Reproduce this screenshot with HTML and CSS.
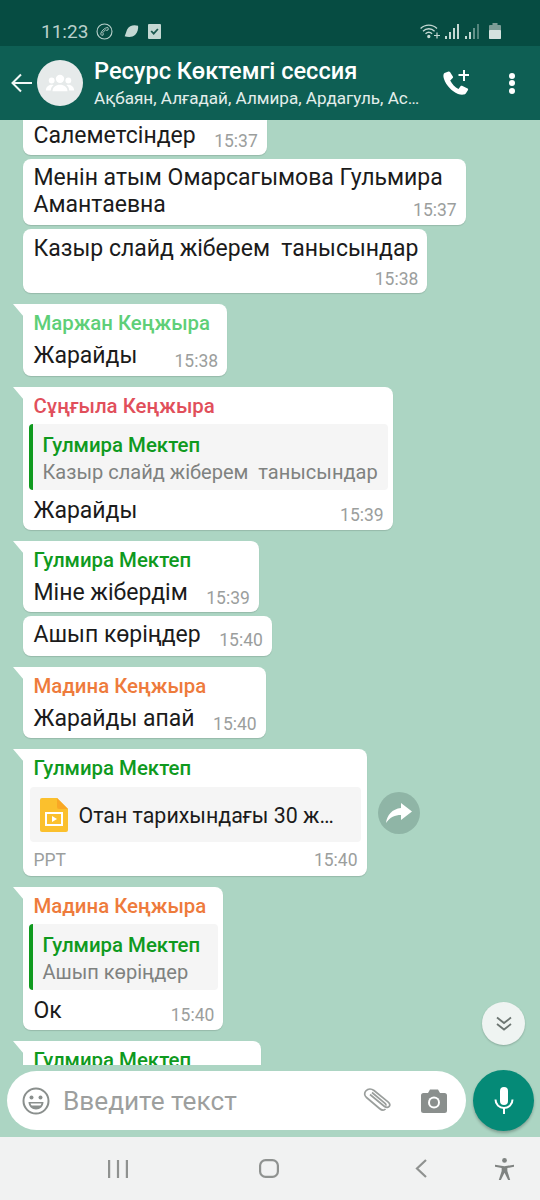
FILE: index.html
```html
<!DOCTYPE html>
<html lang="ru">
<head>
  <meta charset="UTF-8" />
  <meta name="viewport" content="width=device-width, initial-scale=1" />
  <title>Ресурс Көктемгі сессия</title>
  <link rel="stylesheet" href="styles.css">
</head>
<body>
  <div class="status-bar">
    <span class="status-time">11:23</span>
    <svg class="status-call" width="17" height="17" viewBox="0 0 20 20" fill="none" stroke="#b9d0cb" stroke-width="1.300">
      <circle cx="10" cy="10" r="8.800"/>
      <path d="M13.800 5.200c-4 .6-7.600 4.200-8.400 8 .8 1 1.700 1.400 2.800 1.200l.4-1.800-1-1 3.800-3.800 1 1 1.800-.6c.4-1 .2-2-.4-3z" stroke-width="1.100"/>
    </svg>
    <svg class="status-leaf" width="15" height="14" viewBox="0 0 16 14">
      <path d="M15 1.500C11 0 5.500 1 3.500 5 2.500 7 2 9.500 .7 12.500 4 13.500 9 14 12 11 14.500 8.500 15.500 4.500 15 1.500z" fill="#c4d8d3"/>
    </svg>
    <svg width="13" height="15" viewBox="0 0 13 15">
      <rect width="13" height="15" rx="1" fill="#c4d8d3"/>
      <path d="M3.200 7l2.500 2.700 4.200-4.700" fill="none" stroke="#1c5a50" stroke-width="1.800"/>
    </svg>
    <span class="status-right">
      <svg width="20" height="16" viewBox="0 0 20 16" fill="none" stroke="#c4d8d3" stroke-width="1.300">
        <path d="M.6 5.500c4.600-4.600 11.800-4.600 16.400 0M3 8.200c3.300-3.300 8.300-3.300 11.600 0M5.500 10.800c2-1.900 4.600-1.900 6.600 0"/>
        <circle cx="8.800" cy="13.500" r="1" fill="#c4d8d3"/>
        <path d="M14 12.500h6M17 9.500v6" stroke-width="1.200"/>
      </svg>
      <svg width="14" height="16" viewBox="0 0 14 16" fill="#c4d8d3">
        <rect x="0" y="13" width="2" height="3"/><rect x="4" y="9" width="2" height="7"/>
        <rect x="8" y="5" width="2" height="11"/><rect x="12" y="1" width="2" height="15"/>
      </svg>
      <svg width="14" height="16" viewBox="0 0 14 16" fill="#c4d8d3">
        <rect x="0" y="13" width="2" height="3"/><rect x="4" y="9" width="2" height="7"/>
        <rect x="8" y="5" width="2" height="11" opacity=".5"/><rect x="12" y="1" width="2" height="15" opacity=".4"/>
      </svg>
      <svg class="battery" width="12" height="16" viewBox="0 0 12 16">
        <rect x="3.500" y="0" width="5" height="2" fill="#7d9d97"/>
        <rect x="0" y="2" width="12" height="14" rx="1" fill="#7d9d97"/>
        <rect x="0" y="7" width="12" height="9" rx="1" fill="#d5e2de"/>
      </svg>
    </span>
  </div>

  <header class="app-bar">
    <svg class="back" width="23" height="20" viewBox="0 0 23 20" fill="none" stroke="#f2f7f6" stroke-width="2">
      <path d="M22 10H2.500M11 1.500 2.500 10l8.500 8.500"/>
    </svg>
    <div class="avatar">
      <svg width="30" height="20" viewBox="0 0 34 24" fill="#fff">
        <circle cx="17" cy="7" r="5"/><circle cx="7" cy="9" r="3.500"/><circle cx="27" cy="9" r="3.500"/>
        <path d="M8 22c0-5 4-8 9-8s9 3 9 8z"/>
        <path d="M0 21c0-4 3-7 7-7 1 0 1.700.2 2.400.5C7 16 6 19 6 21zM34 21c0-4-3-7-7-7-1 0-1.700.2-2.400.5C27 16 28 19 28 21z"/>
      </svg>
    </div>
    <div class="chat-title">
      <div class="chat-name">Ресурс Көктемгі сессия</div>
      <div class="chat-members">Ақбаян, Алғадай, Алмира, Ардагуль, Ас…</div>
    </div>
    <svg class="add-call" width="26" height="26" viewBox="0 0 26 26" fill="#fff">
      <path d="M5.500 1.500 1.500 3C.3 3.800 0 6 1 9c2.300 6.500 7.500 12 14 15 3 1 6.500 1 7.800-.5l2.200-3.500c.3-.6.100-1.100-.4-1.400l-5.600-2.800c-.5-.2-1-.1-1.300.3l-2.200 2.800c-3.500-1.800-6.500-5-8.300-8.500L9.700 8c.4-.3.500-.8.300-1.300L7 2c-.3-.5-1-.7-1.500-.5z"/>
      <path d="M20 0h2v4h4v2h-4v5h-2V6h-4.500V4H20z"/>
    </svg>
    <div class="more"><i></i><i></i><i></i></div>
  </header>

  <main class="chat">
    <div class="messages">
      <div class="bubble first">
        <div class="row"><span class="text">Салеметсіндер</span><span class="time">15:37</span></div>
      </div>
      <div class="bubble two-lines">
        <div class="text">Менін атым Омарсагымова Гульмира<br>Амантаевна</div>
        <div class="time">15:37</div>
      </div>
      <div class="bubble time-below">
        <div class="text">Казыр слайд жіберем&nbsp; танысындар</div>
        <div class="time">15:38</div>
      </div>

      <div class="bubble tail">
        <div class="sender marzhan">Маржан Кеңжыра</div>
        <div class="row"><span class="text">Жарайды</span><span class="time">15:38</span></div>
      </div>

      <div class="bubble tail">
        <div class="sender sungyla">Сұңғыла Кеңжыра</div>
        <div class="quote">
          <div class="quote-name">Гулмира Мектеп</div>
          <div class="quote-text">Казыр слайд жіберем&nbsp; танысындар</div>
        </div>
        <div class="row"><span class="text">Жарайды</span><span class="time">15:39</span></div>
      </div>

      <div class="bubble tail short">
        <div class="sender gulmira">Гулмира Мектеп</div>
        <div class="row"><span class="text">Міне жібердім</span><span class="time">15:39</span></div>
      </div>
      <div class="bubble same">
        <div class="row"><span class="text">Ашып көріңдер</span><span class="time">15:40</span></div>
      </div>

      <div class="bubble tail short">
        <div class="sender madina">Мадина Кеңжыра</div>
        <div class="row"><span class="text">Жарайды апай</span><span class="time">15:40</span></div>
      </div>

      <div class="file-line">
        <div class="bubble tail file-bubble">
          <div class="sender gulmira">Гулмира Мектеп</div>
          <div class="file">
            <svg width="28" height="34" viewBox="0 0 28 34">
              <path d="M0 2a2 2 0 0 1 2-2h15l11 11v21a2 2 0 0 1-2 2H2a2 2 0 0 1-2-2z" fill="#fbc02d"/>
              <path d="M17 0l11 11H19a2 2 0 0 1-2-2z" fill="#f9a825"/>
              <rect x="6" y="15" width="16" height="12" fill="none" stroke="#fff" stroke-width="2"/>
              <path d="M12 18v6l5-3z" fill="#fff"/>
            </svg>
            <span class="file-name">Отан тарихындағы 30 ж…</span>
          </div>
          <div class="row file-foot"><span class="file-type">PPT</span><span class="time">15:40</span></div>
        </div>
        <div class="forward">
          <svg width="26" height="20" viewBox="0 0 26 20" fill="#fff">
            <path d="M15 0l11 8.500L15 17v-5C9 12 4 14 0 20 1 12 6 6 15 5z"/>
          </svg>
        </div>
      </div>

      <div class="bubble tail">
        <div class="sender madina">Мадина Кеңжыра</div>
        <div class="quote small">
          <div class="quote-name">Гулмира Мектеп</div>
          <div class="quote-text">Ашып көріңдер</div>
        </div>
        <div class="row"><span class="text">Ок</span><span class="time">15:40</span></div>
      </div>

      <div class="bubble tail last">
        <div class="sender gulmira">Гулмира Мектеп</div>
      </div>
    </div>

    <div class="scroll-down">
      <svg width="18" height="16" viewBox="0 0 18 16" fill="none" stroke="#6d7672" stroke-width="1.800">
        <path d="M2 1.500l7 5.500 7-5.500M2 8l7 5.500L16 8"/>
      </svg>
    </div>

    <div class="composer">
      <div class="input">
        <svg class="smile" width="28" height="28" viewBox="0 0 28 28">
          <circle cx="14" cy="14" r="12.500" fill="none" stroke="#8a8f8d" stroke-width="2"/>
          <circle cx="9.500" cy="10.500" r="2" fill="#8a8f8d"/><circle cx="18.500" cy="10.500" r="2" fill="#8a8f8d"/>
          <path d="M6.500 15h15c0 4.500-3.500 7.500-7.500 7.500S6.500 19.500 6.500 15z" fill="#8a8f8d"/>
          <path d="M8.500 16.500h11c-.4 1-.7 1.500-1.200 2h-8.600c-.5-.5-.9-1-1.200-2z" fill="#fff"/>
        </svg>
        <span class="placeholder">Введите текст</span>
        <svg class="clip" width="28" height="25" viewBox="0 0 28 25" fill="none" stroke="#9a9e9c" stroke-width="1.700">
          <path d="M7 6.500l14.500 12c2 1.500 4 1 4.800-.2s.6-3-1.300-4.500L11 2.500C8.500.6 5 .6 3 2.800S1.300 7.700 3.500 9.500l13 11c2 1.700 4.500 2 6 .5M9 4.500l13 10.800c1 .9 1 1.700.5 2.300"/>
        </svg>
        <svg class="camera" width="26" height="24" viewBox="0 0 26 24">
          <path d="M2.500 4H7l2-3.500h8L19 4h4.500A2.500 2.500 0 0 1 26 6.500v15a2.500 2.500 0 0 1-2.500 2.500h-21A2.500 2.500 0 0 1 0 21.500v-15A2.500 2.500 0 0 1 2.500 4z" fill="#8a8f8d"/>
          <circle cx="13" cy="13.500" r="6" fill="#fff"/><circle cx="13" cy="13.500" r="4" fill="#8a8f8d"/>
        </svg>
      </div>
      <div class="mic">
        <svg width="20" height="28" viewBox="0 0 20 28">
          <rect x="6" y="0" width="8" height="18" rx="4" fill="#fff"/>
          <path d="M1.500 12.500c0 5 3.800 8.500 8.500 8.500s8.500-3.500 8.500-8.500" fill="none" stroke="#fff" stroke-width="2"/>
          <rect x="9" y="20" width="2" height="7" fill="#fff"/>
        </svg>
      </div>
    </div>
  </main>

  <nav class="nav-bar">
    <svg width="20" height="18" viewBox="0 0 20 18" fill="#8f9290">
      <rect x="0" y="0" width="2.200" height="18"/><rect x="8.900" y="0" width="2.200" height="18"/><rect x="17.800" y="0" width="2.200" height="18"/>
    </svg>
    <svg class="nav-home" width="20" height="19" viewBox="0 0 20 19" fill="none" stroke="#8f9290" stroke-width="2.200">
      <rect x="1.100" y="1.100" width="17.800" height="16.800" rx="5.500"/>
    </svg>
    <svg class="nav-back" width="12" height="19" viewBox="0 0 12 19" fill="none" stroke="#8f9290" stroke-width="2.200">
      <path d="M11 1 2 9.500l9 8.500"/>
    </svg>
    <svg class="nav-person" width="19" height="24" viewBox="0 0 20 24" fill="#7f8381">
      <circle cx="10" cy="3" r="2.500"/>
      <path d="M0 7.500 10 9l10-1.500v2l-7 1.500v3l3 9.500h-2.200L10 16l-3.800 7.500H4l3-9.500v-3L0 9.500z"/>
    </svg>
  </nav>
</body>
</html>
```

FILE: styles.css
```css
* {
  box-sizing: border-box;
}

body {
  margin: 0;
  width: 540px;
  height: 1200px;
  overflow: hidden;
  display: flex;
  flex-direction: column;
  font-family: Roboto, "Noto Sans", sans-serif;
  background: #acd5c3;
}

/* status bar */
.status-bar {
  height: 46px;
  flex: none;
  display: flex;
  align-items: center;
  padding: 16px 39px 0 41px;
  background: #064c42;
  color: #b9d0cb;
  font-size: 19px;
}

.status-time {
  margin-right: 8px;
}

.status-call {
  margin-right: 11px;
}

.status-leaf {
  margin-right: 9px;
}

.status-right {
  margin-left: auto;
  display: flex;
  align-items: center;
  gap: 5.500px;
}

.battery {
  margin-left: 5px;
}

/* header */
.app-bar {
  height: 74px;
  flex: none;
  display: flex;
  align-items: center;
  padding-left: 10px;
  background: #0e5f54;
  color: #fff;
}

.back {
  margin-right: 4px;
}

.avatar {
  width: 46px;
  height: 46px;
  border-radius: 50%;
  background: #e6eaea;
  display: flex;
  align-items: center;
  justify-content: center;
}

.chat-title {
  margin-left: 11px;
  width: 335px;
}

.chat-name {
  font-size: 23.600px;
  font-weight: 500;
  line-height: 28px;
  white-space: nowrap;
}

.chat-members {
  margin-top: 1px;
  font-size: 17.100px;
  line-height: 24px;
  color: #e3eeeb;
  white-space: nowrap;
}

.add-call {
  margin-left: 14px;
}

.more {
  margin-left: 39.500px;
  display: flex;
  flex-direction: column;
  gap: 1.500px;
}

.more i {
  width: 6px;
  height: 6px;
  border-radius: 50%;
  background: #fff;
}

/* chat */
.chat {
  flex: 1;
  position: relative;
  display: flex;
  flex-direction: column;
  min-height: 0;
}

.messages {
  flex: 1;
  min-height: 0;
  overflow: hidden;
  display: flex;
  flex-direction: column;
  align-items: flex-start;
  padding-left: 23px;
}

.bubble {
  position: relative;
  flex: none;
  background: #fff;
  border-radius: 8px;
  padding: 0 9px 0 10.500px;
  margin-top: 11px;
  box-shadow: 0 1px 1px rgba(0, 0, 0, .13);
}

.bubble.first {
  margin-top: 0;
  height: 35px;
  border-radius: 0 0 8px 8px;
}

.bubble.first .row {
  margin-top: 1px;
}

.bubble.two-lines,
.bubble.time-below,
.bubble.same {
  margin-top: 4px;
}

.bubble.two-lines {
  height: 66px;
  padding-top: 5px;
}

.bubble.two-lines .text {
  line-height: 27px;
  margin-right: 14px;
}

.bubble.two-lines .time {
  text-align: right;
  margin-top: -18px;
}

.bubble.time-below {
  height: 64px;
  padding-top: 5px;
}

.bubble.time-below .time {
  text-align: right;
  margin-top: 5px;
}

.bubble.same {
  height: 40px;
  padding-top: 4px;
}

.bubble.tail {
  border-top-left-radius: 0;
  padding-top: 6px;
  padding-bottom: 5px;
}

.bubble.tail.short {
  padding-bottom: 4px;
}

.bubble.tail::before {
  content: "";
  position: absolute;
  left: -10px;
  top: 0;
  width: 11px;
  height: 13px;
  background: #fff;
  clip-path: polygon(0 0, 100% 0, 100% 100%);
}

.bubble.last {
  width: 238px;
  height: 60px;
}

.row {
  display: flex;
  align-items: flex-end;
  justify-content: space-between;
  gap: 18.500px;
}

.text {
  font-size: 23px;
  line-height: 30px;
  color: #1b1b1b;
  white-space: nowrap;
}

.time {
  font-size: 17.500px;
  line-height: 20px;
  color: #9b9e9d;
  white-space: nowrap;
}

.sender {
  font-size: 20.400px;
  font-weight: 500;
  line-height: 26px;
  margin-right: 8px;
  white-space: nowrap;
}

.sender + .row {
  margin-top: 5px;
}

.marzhan { color: #5ecf78; }
.sungyla { color: #e14f5b; }
.gulmira { color: #0f9a1e; }
.madina { color: #ee7b3c; }

.quote {
  margin: 5px -4px 0 -5px;
  height: 66px;
  padding: 7px 10px 0 10px;
  background: #f5f5f5;
  border-left: 4px solid #0f9a1e;
  border-radius: 4px;
}

.quote.small {
  padding-right: 16px;
}

.quote + .row {
  margin-top: 5.500px;
  margin-bottom: -.5px;
}

.quote + .row .time {
  position: relative;
  top: -.5px;
}

.quote-name {
  font-size: 20.400px;
  font-weight: 500;
  line-height: 28px;
  color: #0f9a1e;
  white-space: nowrap;
}

.quote-text {
  font-size: 20.050px;
  line-height: 26px;
  color: #7f8280;
  white-space: nowrap;
}

.file-line {
  flex: none;
  display: flex;
  align-items: center;
  gap: 11px;
}

.bubble.file-bubble {
  padding-bottom: 0;
}

.file {
  margin: 6px -3px 0 -4px;
  width: 331px;
  height: 55px;
  display: flex;
  align-items: center;
  gap: 11px;
  padding-left: 10px;
  background: #f5f5f5;
  border-radius: 4px;
}

.file-name {
  font-size: 21.400px;
  line-height: 28px;
  padding-top: 2px;
  color: #1b1b1b;
  white-space: nowrap;
}

.row.file-foot {
  height: 34px;
  margin-top: 0;
  padding-top: 2px;
  align-items: center;
}

.file-type {
  font-size: 17.500px;
  color: #9b9e9d;
}

.forward {
  width: 42px;
  height: 42px;
  margin-top: 11px;
  border-radius: 50%;
  background: #8fb5a6;
  display: flex;
  align-items: center;
  justify-content: center;
}

.scroll-down {
  position: absolute;
  left: 482px;
  top: 882px;
  width: 43px;
  height: 43px;
  border-radius: 50%;
  background: #eff4f2;
  box-shadow: 0 1px 2px rgba(0, 0, 0, .2);
  display: flex;
  align-items: center;
  justify-content: center;
}

/* message box */
.composer {
  height: 72px;
  flex: none;
  display: flex;
  gap: 7px;
  padding: 6px 6px 0 7px;
}

.input {
  width: 459px;
  height: 59px;
  display: flex;
  align-items: center;
  padding: 0 19px 0 15px;
  background: #fff;
  border-radius: 30px;
}

.placeholder {
  margin-left: 13px;
  font-size: 26.200px;
  color: #9d9f9e;
}

.clip {
  margin-left: auto;
}

.camera {
  margin-left: 30px;
}

.mic {
  width: 61px;
  height: 61px;
  margin-top: -1px;
  border-radius: 50%;
  background: #058a77;
  box-shadow: 0 2px 3px rgba(0, 0, 0, .25);
  display: flex;
  align-items: center;
  justify-content: center;
}

/* navigation */
.nav-bar {
  height: 63px;
  flex: none;
  display: flex;
  align-items: center;
  padding-left: 108px;
  background: #f1f2f2;
}

.nav-home {
  margin-left: 131px;
}

.nav-back {
  margin-left: 136px;
}

.nav-person {
  margin-left: 68px;
}
```
